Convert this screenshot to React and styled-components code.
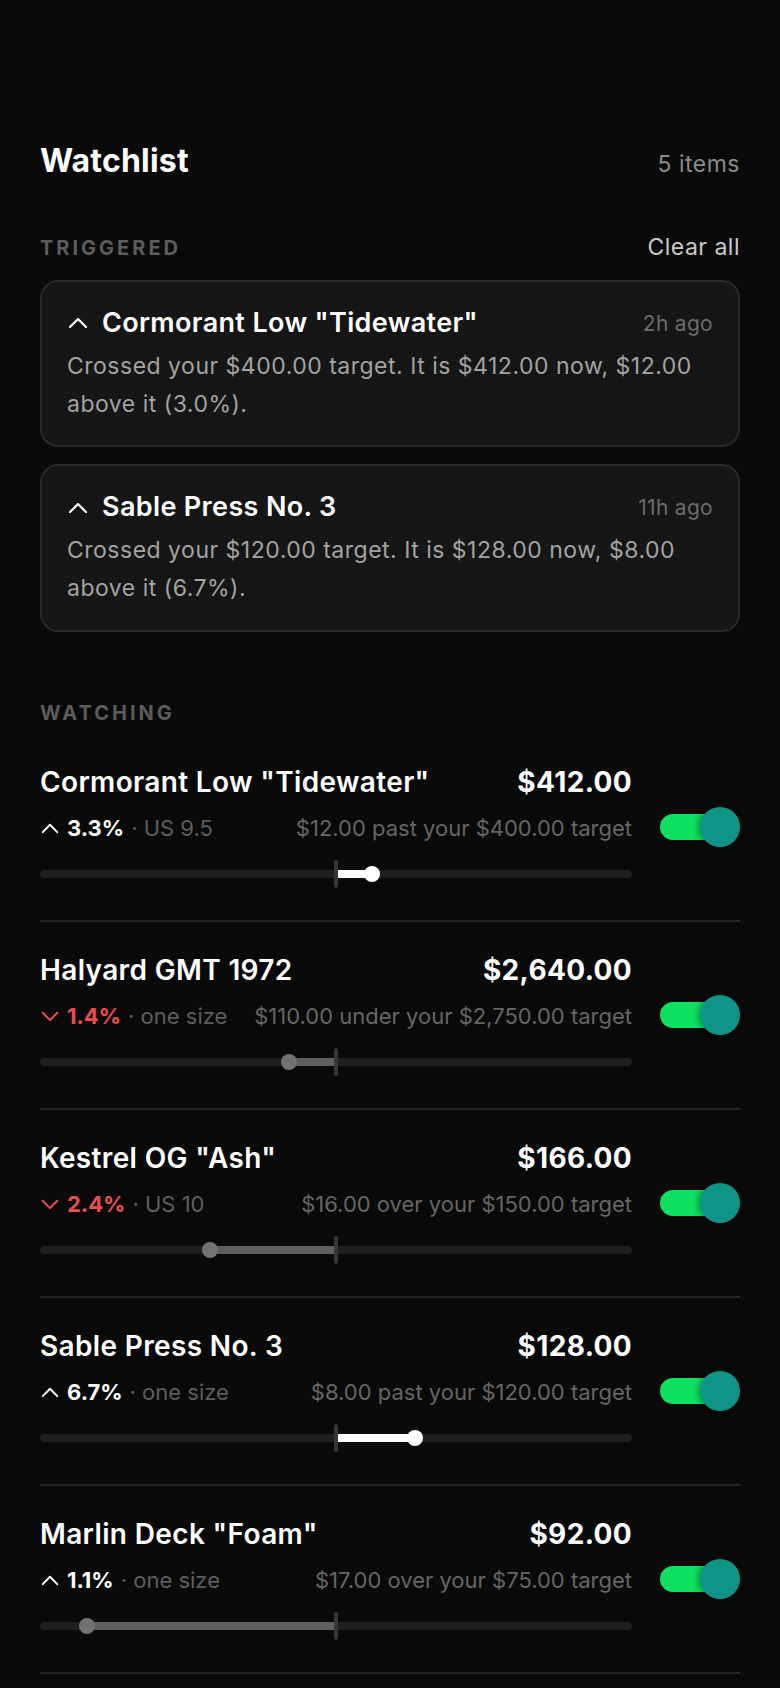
import React from 'react'
import styled, { createGlobalStyle } from 'styled-components'

const GlobalStyle = createGlobalStyle`
  * { box-sizing: border-box; }
  html, body { margin: 0; padding: 0; background: #0a0a0a; }
  body {
    font-family: Inter, "Noto Sans", sans-serif;
    color: #f4f4f4;
    -webkit-font-smoothing: antialiased;
  }
`

const triggered = [
  { name: 'Cormorant Low "Tidewater"', ago: '2h ago', text: 'Crossed your $400.00 target. It is $412.00 now, $12.00 above it (3.0%).' },
  { name: 'Sable Press No. 3', ago: '11h ago', text: 'Crossed your $120.00 target. It is $128.00 now, $8.00 above it (6.7%).' },
]

const watching = [
  { name: 'Cormorant Low "Tidewater"', price: 412, target: 400, dir: 'up', pct: '3.3%', size: 'US 9.5', note: '$12.00 past your $400.00 target', hit: true },
  { name: 'Halyard GMT 1972', price: 2640, target: 2750, dir: 'down', pct: '1.4%', size: 'one size', note: '$110.00 under your $2,750.00 target', hit: false },
  { name: 'Kestrel OG "Ash"', price: 166, target: 150, dir: 'down', pct: '2.4%', size: 'US 10', note: '$16.00 over your $150.00 target', hit: false },
  { name: 'Sable Press No. 3', price: 128, target: 120, dir: 'up', pct: '6.7%', size: 'one size', note: '$8.00 past your $120.00 target', hit: true },
  { name: 'Marlin Deck "Foam"', price: 92, target: 75, dir: 'up', pct: '1.1%', size: 'one size', note: '$17.00 over your $75.00 target', hit: false },
]

const money = (n) => '$' + n.toLocaleString('en-US', { minimumFractionDigits: 2, maximumFractionDigits: 2 })

function Chevron({ down, size = 22 }) {
  return (
    <Icon width={size} height={size * 0.6} viewBox="0 0 22 13" fill="none">
      <polyline
        points={down ? '3,3 11,11 19,3' : '3,11 11,3 19,11'}
        stroke="currentColor"
        strokeWidth="2.2"
        strokeLinecap="round"
        strokeLinejoin="round"
      />
    </Icon>
  )
}

function Slider({ item }) {
  const diff = (Math.abs(item.price - item.target) / item.target) * 100
  let pos = item.hit ? 50 + diff * 2 : 50 - diff * 2
  pos = Math.max(8, Math.min(92, pos))
  const from = Math.min(pos, 50)
  const width = Math.abs(pos - 50)
  return (
    <SliderBox>
      <Track>
        <Fill $hit={item.hit} style={{ left: from + '%', width: width + '%' }} />
        <Marker />
        <Dot $hit={item.hit} style={{ left: pos + '%' }} />
      </Track>
    </SliderBox>
  )
}

function App() {
  return (
    <Page>
      <GlobalStyle />
      <Header>
        <Title>Watchlist</Title>
        <Count>5 items</Count>
      </Header>

      <SectionHead>
        <Label>TRIGGERED</Label>
        <ClearButton>Clear all</ClearButton>
      </SectionHead>
      <Cards>
        {triggered.map((t) => (
          <Card key={t.name}>
            <CardTop>
              <CardName>
                <Chevron />
                {t.name}
              </CardName>
              <Ago>{t.ago}</Ago>
            </CardTop>
            <CardText>{t.text}</CardText>
          </Card>
        ))}
      </Cards>

      <WatchLabel>WATCHING</WatchLabel>
      <List>
        {watching.map((w) => (
          <Row key={w.name}>
            <Info>
              <TopLine>
                <Name>{w.name}</Name>
                <Price>{money(w.price)}</Price>
              </TopLine>
              <SubLine>
                <Change $down={w.dir === 'down'}>
                  <Chevron down={w.dir === 'down'} size={20} />
                  <strong>{w.pct}</strong>
                  <Size>· {w.size}</Size>
                </Change>
                <Note>{w.note}</Note>
              </SubLine>
              <Slider item={w} />
            </Info>
            <Switch aria-label="alert on">
              <SwitchTrack />
              <Knob />
            </Switch>
          </Row>
        ))}
      </List>
    </Page>
  )
}

export default App

const Page = styled.div`
  min-height: 1688px;
  padding: 141px 40px 40px;
  background: #0a0a0a;
`
const Header = styled.header`
  display: flex;
  justify-content: space-between;
  align-items: baseline;
`
const Title = styled.h1`
  margin: 0;
  font-size: 32px;
  line-height: 40px;
  font-weight: 700;
  letter-spacing: 0.2px;
  color: #ffffff;
`
const Count = styled.span`
  font-size: 23px;
  letter-spacing: 0.5px;
  color: #8a8a8a;
`
const SectionHead = styled.div`
  display: flex;
  justify-content: space-between;
  align-items: baseline;
  margin-top: 52px;
`
const Label = styled.h2`
  margin: 0;
  font-size: 20px;
  line-height: 28px;
  font-weight: 700;
  letter-spacing: 0.15em;
  color: #5c5c5c;
`
const WatchLabel = styled(Label)`
  margin-top: 67px;
`
const ClearButton = styled.button`
  border: 0;
  background: none;
  padding: 0;
  font-family: inherit;
  font-size: 23px;
  letter-spacing: 0.5px;
  color: #c9c9c9;
  cursor: pointer;
`
const Cards = styled.div`
  display: flex;
  flex-direction: column;
  gap: 17px;
  margin-top: 18px;
`
const Card = styled.div`
  background: #161616;
  border: 2px solid #282828;
  border-radius: 18px;
  padding: 24px 25px 22px;
`
const CardTop = styled.div`
  display: flex;
  justify-content: space-between;
  align-items: center;
`
const CardName = styled.div`
  display: flex;
  align-items: center;
  gap: 13px;
  font-size: 27px;
  line-height: 34px;
  font-weight: 600;
  letter-spacing: 0.35px;
  color: #ffffff;
`
const Icon = styled.svg`
  flex: none;
  display: block;
`
const Ago = styled.span`
  font-size: 21px;
  letter-spacing: 0.3px;
  color: #6c6c6c;
`
const CardText = styled.p`
  margin: 8px 0 0;
  font-size: 23px;
  line-height: 37.7px;
  letter-spacing: 0.5px;
  color: #a3a3a3;
`
const List = styled.div`
  margin-top: 7px;
`
const Row = styled.div`
  display: flex;
  align-items: center;
  gap: 28px;
  padding: 30px 0 29px;
  border-bottom: 2px solid #242424;
`
const Info = styled.div`
  flex: 1;
  min-width: 0;
`
const TopLine = styled.div`
  display: flex;
  justify-content: space-between;
  align-items: baseline;
  font-size: 28px;
  line-height: 36px;
  font-weight: 600;
  letter-spacing: 0.35px;
  color: #ffffff;
`
const Name = styled.span``
const Price = styled.span`
  font-weight: 700;
`
const SubLine = styled.div`
  display: flex;
  justify-content: space-between;
  align-items: center;
  margin-top: 14px;
  font-size: 22px;
  line-height: 29px;
`
const Change = styled.span`
  display: flex;
  align-items: center;
  gap: 7px;
  color: ${(p) => (p.$down ? '#ec4d4d' : '#ffffff')};
  strong { font-weight: 700; }
`
const Size = styled.span`
  color: #5e5e5e;
`
const Note = styled.span`
  color: #666666;
`
const SliderBox = styled.div`
  height: 34px;
  margin-top: 14px;
  display: flex;
  align-items: center;
`
const Track = styled.div`
  position: relative;
  width: 100%;
  height: 8px;
  border-radius: 4px;
  background: #1f1f1f;
`
const Fill = styled.div`
  position: absolute;
  top: 0;
  bottom: 0;
  background: ${(p) => (p.$hit ? '#ffffff' : '#5f5f5f')};
`
const Marker = styled.div`
  position: absolute;
  left: 50%;
  top: -10px;
  width: 4px;
  height: 28px;
  margin-left: -2px;
  border-radius: 2px;
  background: #363636;
`
const Dot = styled.div`
  position: absolute;
  top: 50%;
  width: 16px;
  height: 16px;
  margin: -8px 0 0 -8px;
  border-radius: 50%;
  background: ${(p) => (p.$hit ? '#ffffff' : '#727272')};
`
const Switch = styled.button`
  position: relative;
  flex: none;
  width: 80px;
  height: 40px;
  padding: 0;
  border: 0;
  background: none;
  display: flex;
  align-items: center;
  cursor: pointer;
`
const SwitchTrack = styled.span`
  width: 70px;
  height: 26px;
  border-radius: 13px;
  background: #0ee060;
`
const Knob = styled.span`
  position: absolute;
  right: 0;
  top: 0;
  width: 40px;
  height: 40px;
  border-radius: 50%;
  background: #0f9488;
  box-shadow: -2px 0 6px rgba(0, 0, 0, 0.35);
`
